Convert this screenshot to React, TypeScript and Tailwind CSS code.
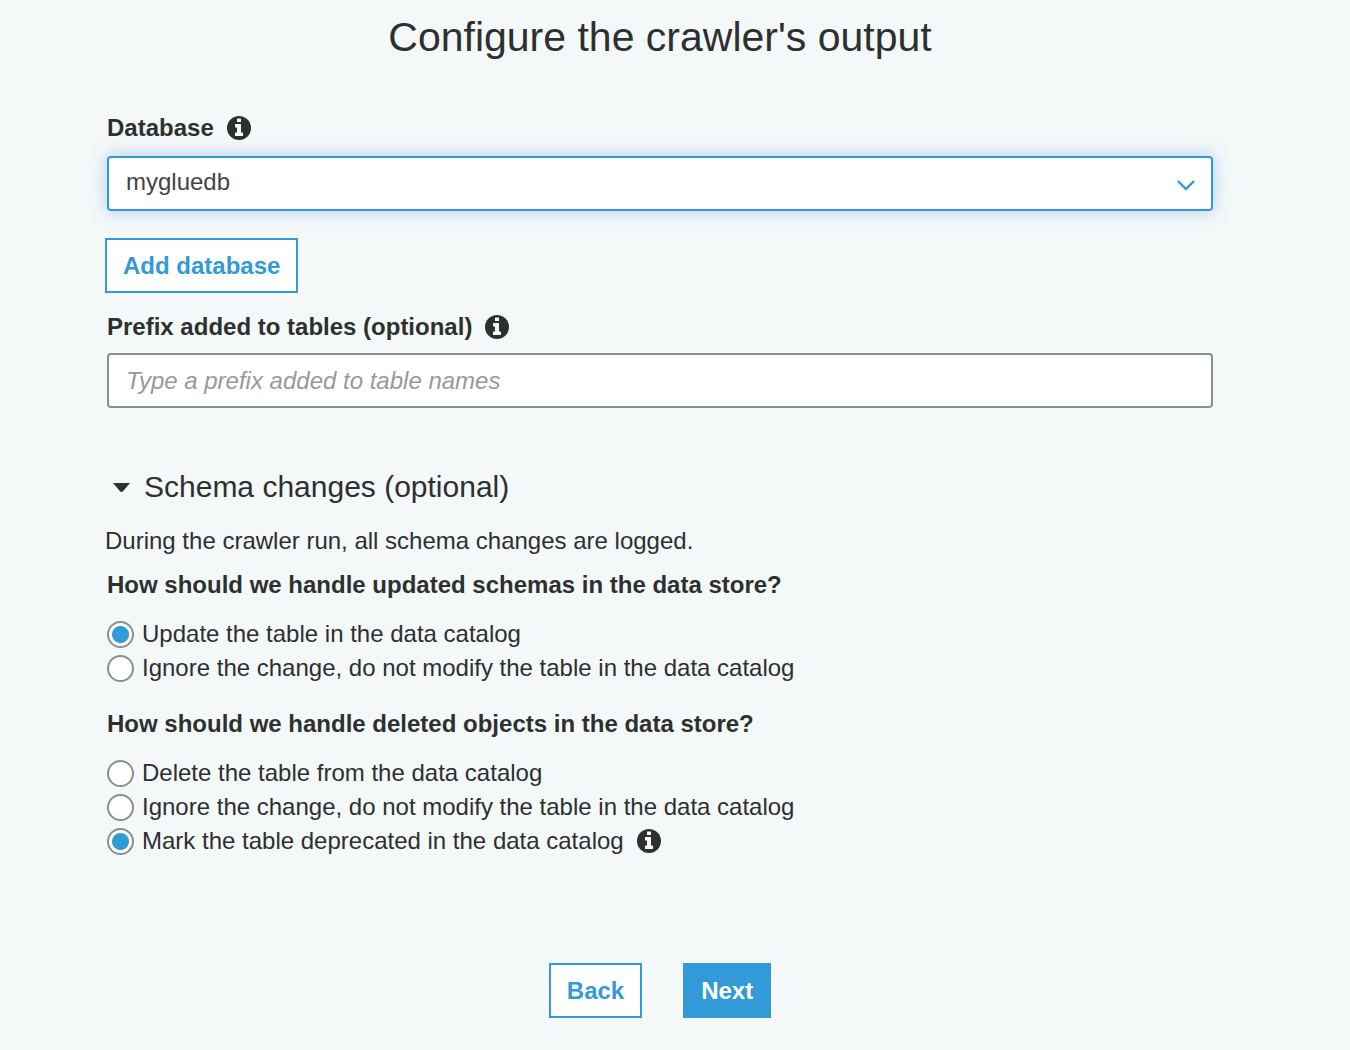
import { useState } from 'react'

const UPDATE_OPTIONS = [
  { value: 'update', label: 'Update the table in the data catalog', info: false },
  { value: 'ignore', label: 'Ignore the change, do not modify the table in the data catalog', info: false },
]

const DELETE_OPTIONS = [
  { value: 'delete', label: 'Delete the table from the data catalog', info: false },
  { value: 'ignore', label: 'Ignore the change, do not modify the table in the data catalog', info: false },
  { value: 'deprecate', label: 'Mark the table deprecated in the data catalog', info: true },
]

function InfoIcon() {
  return (
    <svg viewBox="0 0 24 24" className="size-6 shrink-0" aria-hidden="true">
      <circle cx="12" cy="12" r="12" fill="#2d302f" />
      <path
        d="M10.500 2.500h3a.5.5 0 0 1 .5.5v2.500a.5.5 0 0 1-.5.5h-3a.5.5 0 0 1-.5-.5V3a.5.5 0 0 1 .5-.5zM8.500 8h5a.5.5 0 0 1 .5.5v8h1.500a.5.5 0 0 1 .5.5v2.500a.5.5 0 0 1-.5.5h-7a.5.5 0 0 1-.5-.5V17a.5.5 0 0 1 .5-.5H10v-5H8.500a.5.5 0 0 1-.5-.5V8.500a.5.5 0 0 1 .5-.5z"
        fill="#f4f8f9"
      />
    </svg>
  )
}

type RadioGroupProps = {
  name: string
  legend: string
  options: typeof UPDATE_OPTIONS
  value: string
  onChange: (value: string) => void
}

function RadioGroup({ name, legend, options, value, onChange }: RadioGroupProps) {
  return (
    <fieldset>
      <legend className="mb-4 text-2xl font-bold">{legend}</legend>
      {options.map((opt) => (
        <div key={opt.value} className="flex h-[34px] items-center gap-[13px]">
          <label className="flex items-center gap-2">
            <input
              type="radio"
              name={name}
              value={opt.value}
              checked={value === opt.value}
              onChange={() => onChange(opt.value)}
              className="size-[27px] shrink-0 appearance-none rounded-full border-2 border-[#879091] bg-white bg-clip-padding checked:bg-[radial-gradient(circle,#329ad6_8px,white_9px)]"
            />
            {opt.label}
          </label>
          {opt.info && <InfoIcon />}
        </div>
      ))}
    </fieldset>
  )
}

export default function App() {
  const [database, setDatabase] = useState('mygluedb')
  const [prefix, setPrefix] = useState('')
  const [updated, setUpdated] = useState('update')
  const [deleted, setDeleted] = useState('deprecate')

  return (
    <main className="min-h-screen bg-[#f4f8f9] pt-3 pr-[137px] pb-8 pl-[107px] font-['Liberation_Sans',Arial,sans-serif] text-2xl text-[#2d302f]">
      <h1 className="text-center text-[41px] leading-[50px]">Configure the crawler's output</h1>

      {/* Database */}
      <div className="mt-[50px] flex items-center gap-[13px]">
        <label htmlFor="database" className="font-bold">Database</label>
        <InfoIcon />
      </div>
      <div className="relative mt-3">
        <select
          id="database"
          value={database}
          onChange={(e) => setDatabase(e.target.value)}
          className="block h-[55px] w-full appearance-none rounded-sm border-2 border-[#329ad6] bg-white px-[17px] pb-1 text-[#444] shadow-[0_0_16px_#64a0e080] outline-none"
        >
          <option value="mygluedb">mygluedb</option>
        </select>
        <svg viewBox="0 0 18 11" className="pointer-events-none absolute top-6 right-[18px] w-[18px]" fill="none" stroke="#329ad6" strokeWidth="2.4" aria-hidden="true">
          <path d="M1 1l8 8 8-8" />
        </svg>
      </div>
      <button type="button" className="mt-[27px] -ml-0.5 block h-[55px] border-2 border-[#329ad6] bg-white px-4 font-bold text-[#329ad6]">
        Add database
      </button>

      {/* Table prefix */}
      <div className="mt-[18px] flex items-center gap-[13px]">
        <label htmlFor="prefix" className="font-bold">Prefix added to tables (optional)</label>
        <InfoIcon />
      </div>
      <input
        id="prefix"
        type="text"
        value={prefix}
        onChange={(e) => setPrefix(e.target.value)}
        placeholder="Type a prefix added to table names"
        className="mt-[10px] block h-[55px] w-full rounded-sm border-2 border-[#879091] bg-white px-[17px] outline-none placeholder:text-[#999] placeholder:italic"
      />

      {/* Schema changes */}
      <details open className="mt-[60px]">
        <summary className="flex list-none items-center gap-[14px] pl-[6px] text-[30px] leading-[38px]">
          <svg viewBox="0 0 17 9" className="w-[17px]" fill="#2d302f" aria-hidden="true">
            <path d="M0 0h17L10 8.200q-1.500 1.600-3 0z" />
          </svg>
          Schema changes (optional)
        </summary>
        <p className="mt-[19px] mb-3 -ml-0.5">During the crawler run, all schema changes are logged.</p>
        <RadioGroup
          name="updated"
          legend="How should we handle updated schemas in the data store?"
          options={UPDATE_OPTIONS}
          value={updated}
          onChange={setUpdated}
        />
        <div className="mt-[23px]">
          <RadioGroup
            name="deleted"
            legend="How should we handle deleted objects in the data store?"
            options={DELETE_OPTIONS}
            value={deleted}
            onChange={setDeleted}
          />
        </div>
      </details>

      <div className="mt-[105px] flex justify-center gap-[41px]">
        <button type="button" className="h-[55px] border-2 border-[#329ad6] bg-white px-4 font-bold text-[#329ad6]">
          Back
        </button>
        <button type="button" className="h-[55px] border-2 border-[#329ad6] bg-[#329ad6] px-4 font-bold text-white">
          Next
        </button>
      </div>
    </main>
  )
}
